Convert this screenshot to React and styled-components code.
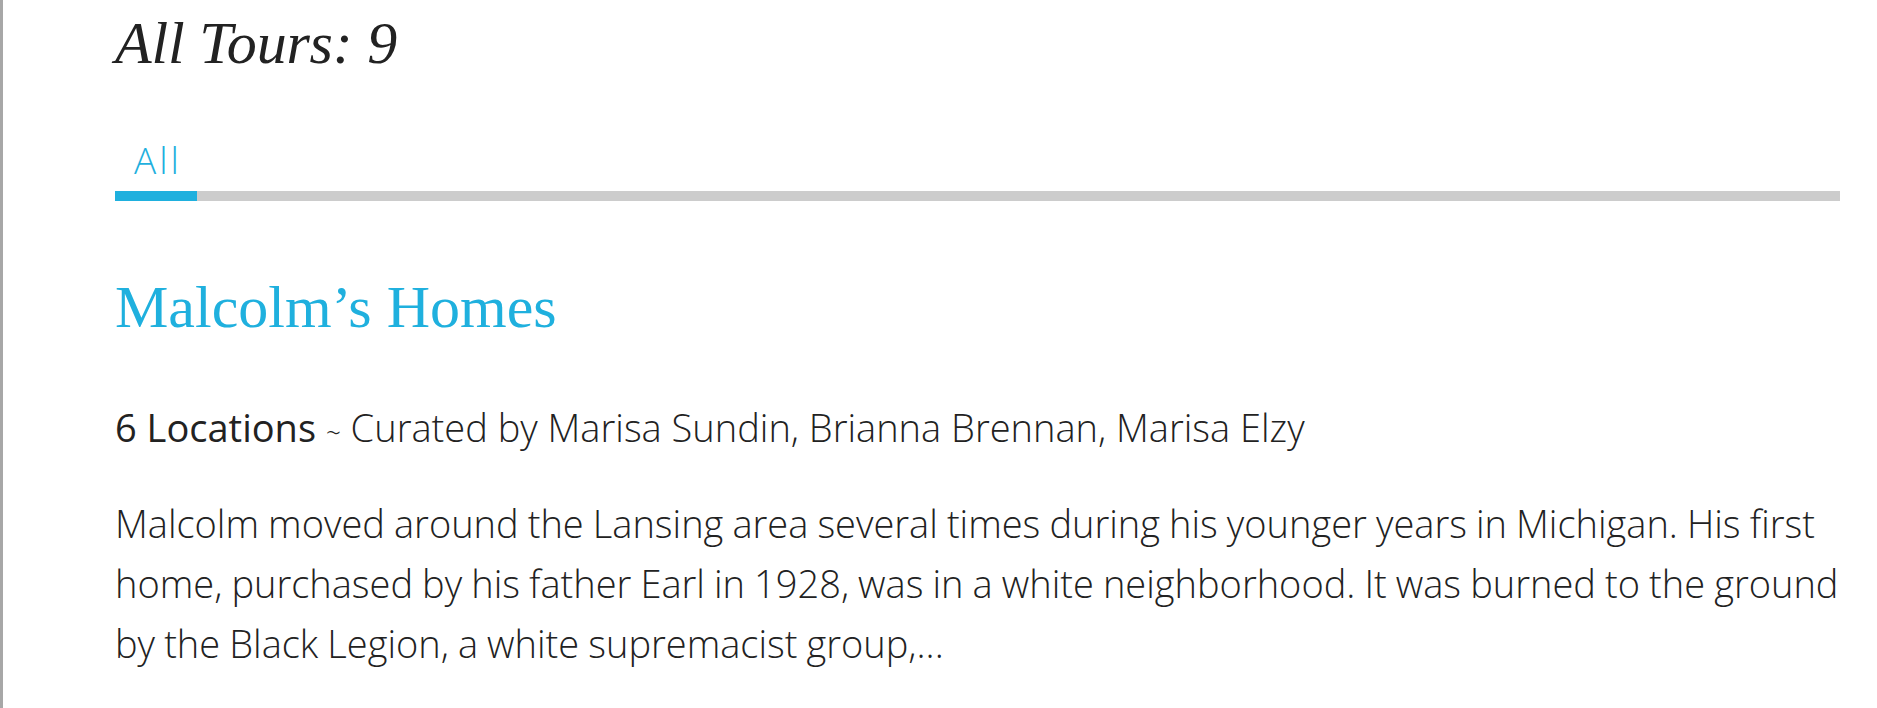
import React from "react";
import styled, { createGlobalStyle } from "styled-components";

const GlobalStyle = createGlobalStyle`
  html, body {
    margin: 0;
    padding: 0;
    background: #ffffff;
  }
  body {
    font-family: "Open Sans", "Liberation Sans", sans-serif;
  }
`;

const ACCENT = "#1fb0de";

const Page = styled.div`
  min-height: 708px;
  box-sizing: border-box;
  border-left: 3px solid #a7a7a7;
  padding: 10px 37px 0 112px;
`;

const Title = styled.h1`
  margin: 0;
  font-family: "Liberation Serif", "Times New Roman", serif;
  font-style: italic;
  font-weight: 400;
  font-size: 60px;
  line-height: 66px;
  letter-spacing: -0.2px;
  color: #222222;
`;

const TabList = styled.div`
  display: flex;
  margin-top: 62px;
  border-bottom: 10px solid #cccccc;
`;

const Tab = styled.div`
  padding: 0 15px 9px 19px;
  margin-bottom: -10px;
  border-bottom: 10px solid ${(p) => (p.$active ? ACCENT : "transparent")};
  font-family: "Open Sans", "Liberation Sans", sans-serif;
  font-weight: 300;
  font-size: 37px;
  line-height: 44px;
  letter-spacing: 3px;
  color: ${ACCENT};
`;

const TourCard = styled.article`
  padding-top: 73px;
`;

const TourName = styled.h2`
  margin: 0;
  font-family: "Liberation Serif", "Times New Roman", serif;
  font-weight: 400;
  font-size: 60px;
  line-height: 66px;
  color: ${ACCENT};
`;

const Meta = styled.p`
  margin: 63px 0 0;
  font-size: 38px;
  line-height: 48px;
  font-weight: 300;
  color: #222222;
`;

const Count = styled.span`
  font-weight: 400;
`;

const Tilde = styled.span`
  font-size: 26px;
`;

const Summary = styled.p`
  margin: 37px 0 0;
  font-size: 38px;
  line-height: 60px;
  font-weight: 300;
  word-spacing: -0.8px;
  color: #222222;
`;

export default function App() {
  return (
    <>
      <GlobalStyle />
      <Page>
        <Title>All Tours: 9</Title>
        <TabList>
          <Tab $active>All</Tab>
        </TabList>
        <TourCard>
          <TourName>Malcolm’s Homes</TourName>
          <Meta>
            <Count>6 Locations</Count> <Tilde>~</Tilde> Curated by Marisa Sundin,
            Brianna Brennan, Marisa Elzy
          </Meta>
          <Summary>
            Malcolm moved around the Lansing area several times during his
            younger years in Michigan. His first home, purchased by his father
            Earl in 1928, was in a white neighborhood. It was burned to the
            ground by the Black Legion, a white supremacist group,...
          </Summary>
        </TourCard>
      </Page>
    </>
  );
}
